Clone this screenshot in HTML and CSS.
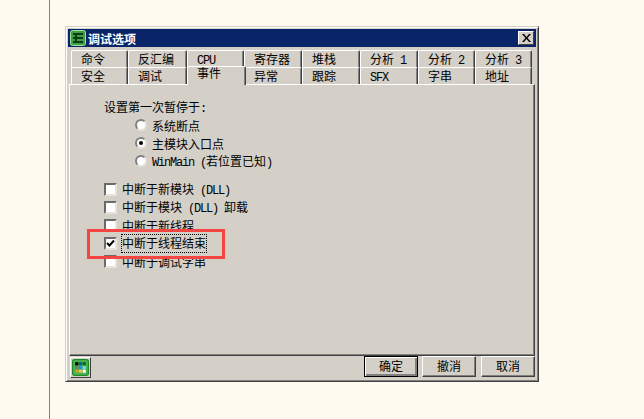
FILE: index.html
```html
<!DOCTYPE html>
<html lang="zh-CN">
<head>
    <meta charset="UTF-8">
    <title>调试选项</title>
    <link rel="stylesheet" href="styles.css">
</head>
<body>
    <div class="page">
        <div class="dialog">
            <div class="titlebar">
                <svg class="app-icon" width="16" height="16" viewBox="0 0 16 16">
                    <rect x="0.5" y="0.5" width="15" height="15" rx="2" fill="#3f9f45" stroke="#9fe09f"/>
                    <path d="M3 4h10M3 8h10M3 12h10M6 3v10" stroke="#0b3d12" stroke-width="2" fill="none"/>
                </svg>
                <span class="title">调试选项</span>
                <button class="close">
                    <svg width="9" height="8" viewBox="0 0 9 8"><path d="M0 0l3.500 4L0 8h2l2.500-3L7 8h2L5.500 4 9 0H7L4.500 3 2 0z" fill="#000"/></svg>
                </button>
            </div>

            <!-- tabs -->
            <div class="tabs">
                <div class="tab-row">
                    <div class="tab">命令</div>
                    <div class="tab">反汇编</div>
                    <div class="tab"><span class="latin">CPU</span></div>
                    <div class="tab">寄存器</div>
                    <div class="tab">堆栈</div>
                    <div class="tab">分析<span class="latin"> 1</span></div>
                    <div class="tab">分析<span class="latin"> 2</span></div>
                    <div class="tab">分析<span class="latin"> 3</span></div>
                </div>
                <div class="tab-row">
                    <div class="tab">安全</div>
                    <div class="tab">调试</div>
                    <div class="tab active">事件</div>
                    <div class="tab">异常</div>
                    <div class="tab">跟踪</div>
                    <div class="tab"><span class="latin">SFX</span></div>
                    <div class="tab">字串</div>
                    <div class="tab">地址</div>
                </div>
            </div>

            <div class="panel">
                <div class="group-label">设置第一次暂停于<span class="latin">:</span></div>
                <div class="radios">
                    <div class="opt"><span class="radio"></span><span>系统断点</span></div>
                    <div class="opt"><span class="radio on"></span><span>主模块入口点</span></div>
                    <div class="opt"><span class="radio"></span><span><span class="latin">WinMain (</span>若位置已知<span class="latin">)</span></span></div>
                </div>
                <div class="checks">
                    <div class="opt"><span class="check"></span><span>中断于新模块<span class="latin"> (DLL)</span></span></div>
                    <div class="opt"><span class="check"></span><span>中断于模块<span class="latin"> (DLL) </span>卸载</span></div>
                    <div class="opt"><span class="check"></span><span>中断于新线程</span></div>
                    <div class="opt"><span class="check">
                        <svg width="9" height="9" viewBox="0 0 9 9"><path d="M1 4l2.500 2.500L8 1.500" stroke="#000" stroke-width="2" fill="none"/></svg>
                    </span><span class="focus">中断于线程结束</span></div>
                    <div class="opt"><span class="check"></span><span>中断于调试字串</span></div>
                </div>
                <div class="highlight"></div>
            </div>

            <div class="footer">
                <div class="footer-icon">
                    <svg width="17" height="17" viewBox="0 0 16 16">
                        <rect x="0.500" y="0.500" width="15" height="15" rx="2" fill="#45b04a" stroke="#1d8a2a"/>
                        <rect x="3" y="3" width="3" height="3" fill="#000"/>
                        <rect x="6.500" y="3" width="3" height="3" fill="#0a5fa8"/>
                        <rect x="10" y="3" width="3" height="3" fill="#0a6b20"/>
                        <rect x="3" y="6.500" width="3" height="3" fill="#777"/>
                        <rect x="6.500" y="6.500" width="3" height="3" fill="#1a94e0"/>
                        <rect x="10" y="6.500" width="3" height="3" fill="#7fd0f0"/>
                        <rect x="3" y="10" width="3" height="3" fill="#e89a10"/>
                        <rect x="6.500" y="10" width="3" height="3" fill="#f5b850"/>
                        <rect x="10" y="10" width="3" height="3" fill="#fff"/>
                    </svg>
                </div>
                <div class="buttons">
                    <button class="btn default">确定</button>
                    <button class="btn">撤消</button>
                    <button class="btn">取消</button>
                </div>
            </div>
        </div>
    </div>
</body>
</html>
```

FILE: styles.css
```css
html, body {
    margin: 0;
    height: 419px;
    overflow: hidden;
}
body {
    background-color: #fffaf0;
    font-family: "Noto Sans CJK SC", sans-serif;
    font-size: 12px;
    color: #000;
}
.page {
    margin-left: 49px;
    height: 419px;
    box-sizing: border-box;
    border-left: 1px solid #85827a;
    padding: 26px 0 0 15px;
}
.dialog {
    width: 474px;
    height: 356px;
    box-sizing: border-box;
    padding: 2px;
    background: #d4d0c8;
    border: 1px solid;
    border-color: #d4d0c8 #404040 #404040 #d4d0c8;
    box-shadow: inset 1px 1px 0 #fff, inset -1px -1px 0 #808080;
    display: flex;
    flex-direction: column;
}
.titlebar {
    height: 18px;
    flex: none;
    display: flex;
    align-items: center;
    background: #0a246a;
    padding: 0 2px;
}
.app-icon {
    flex: none;
}
.title {
    margin-left: 2px;
    color: #fff;
    font-weight: bold;
    flex: 1;
}
.close {
    width: 16px;
    height: 14px;
    padding: 0;
    background: #d4d0c8;
    border: 1px solid;
    border-color: #fff #404040 #404040 #fff;
    display: flex;
    align-items: center;
    justify-content: center;
}
.tabs {
    position: relative;
    z-index: 1;
    margin: 3px 0 0 3px;
    height: 34px;
    flex: none;
}
.tab-row {
    display: grid;
    grid-template-columns: 57px 59px 57px 58px 58px 58px 57px 57px;
    height: 17px;
}
.tab {
    box-sizing: border-box;
    height: 18px;
    padding-left: 9px;
    line-height: 15px;
    white-space: pre;
    background: #d4d0c8;
    border: 1px solid;
    border-color: #fff #404040 transparent #fff;
    border-bottom: 0;
    border-radius: 2px 2px 0 0;
    box-shadow: inset -1px 0 0 #808080;
}
.tab-row + .tab-row .tab {
    height: 17px;
}
/* the old dialog font has 6px wide latin letters */
.latin {
    font-family: "Liberation Mono", monospace;
    font-size: 12px;
    letter-spacing: -1.2px;
}
.tab-row + .tab-row .tab.active {
    position: relative;
    z-index: 1;
    height: 19px;
    line-height: 12px;
    margin: -1px -2px 0 0;
}
.panel {
    position: relative;
    flex: none;
    height: 272px;
    margin: 0 1px;
    box-sizing: border-box;
    border: 1px solid;
    border-color: #fff #404040 #404040 #fff;
    box-shadow: inset -1px -1px 0 #808080;
    padding: 14px 0 0 34px;
}
.group-label {
    height: 17px;
    line-height: 16px;
}
.radios {
    padding-left: 31px;
}
.opt {
    display: flex;
    align-items: center;
    height: 18px;
    white-space: pre;
}
.radio {
    flex: none;
    width: 12px;
    height: 12px;
    box-sizing: border-box;
    margin-right: 5px;
    background: #fff;
    border: 2px solid #808080;
    border-right-color: #e6e3dc;
    border-bottom-color: #e6e3dc;
    border-radius: 50%;
    display: flex;
    align-items: center;
    justify-content: center;
}
.radio.on::after {
    content: "";
    width: 4px;
    height: 4px;
    background: #000;
    border-radius: 50%;
}
.checks {
    margin-top: 10px;
}
.check {
    flex: none;
    width: 13px;
    height: 13px;
    box-sizing: border-box;
    margin-right: 5px;
    background: #fff;
    border: 2px solid;
    border-color: #6a6a6a #e6e3dc #e6e3dc #6a6a6a;
    display: flex;
    align-items: center;
    justify-content: center;
}
.focus {
    outline: 1px dotted #000;
    height: 17px;
    line-height: 16px;
}
/* red annotation box drawn over the screenshot */
.highlight {
    position: absolute;
    left: 17px;
    top: 144px;
    width: 138px;
    height: 30px;
    box-sizing: border-box;
    border: 3px solid #f44542;
}
.footer {
    flex: 1;
    display: flex;
    align-items: flex-start;
    justify-content: space-between;
    padding: 0 1px 0 2px;
}
.footer-icon {
    width: 21px;
    height: 21px;
    margin-top: 1px;
    box-sizing: border-box;
    border: 1px solid;
    border-color: #fff #404040 #404040 #fff;
    display: flex;
    align-items: center;
    justify-content: center;
}
.buttons {
    display: flex;
    gap: 4px;
}
.btn {
    width: 54px;
    height: 21px;
    box-sizing: border-box;
    padding: 0 0 2px;
    font: inherit;
    background: #d4d0c8;
    border: 1px solid;
    border-color: #fff #404040 #404040 #fff;
    box-shadow: inset -1px -1px 0 #808080;
}
.btn:last-child {
    margin-left: 1px;
}
.btn.default {
    outline: 1px solid #000;
    outline-offset: -1px;
    box-shadow: inset 1px 1px 0 #fff, inset -2px -2px 0 #808080;
}
```
